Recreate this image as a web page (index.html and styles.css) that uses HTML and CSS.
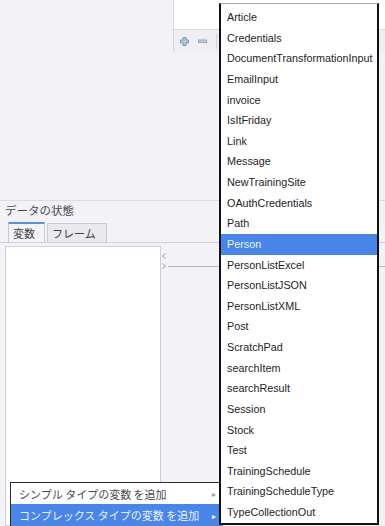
FILE: index.html
```html
<!DOCTYPE html>
<html lang="ja">
<head>
<meta charset="utf-8">
<link rel="stylesheet" href="styles.css">
</head>
<body>
<div class="page">
  <div class="listpanel">
    <div class="listbox"></div>
    <div class="toolbar">
      <svg class="tb-icon" width="9" height="9" viewBox="0 0 9 9"><path d="M3 0.5h3v2.5h2.5v3h-2.5v2.5h-3v-2.5h-2.5v-3h2.5z" fill="#b4c6de" stroke="#7f98bb" stroke-width="1"/></svg>
      <svg class="tb-icon" width="9" height="9" viewBox="0 0 9 9"><rect x="0.5" y="3" width="8" height="2.5" fill="#c3cfdf" stroke="#93a6c0" stroke-width="1"/></svg>
      <span class="tb-sep"></span>
    </div>
  </div>

  <div class="state">
    <div class="state-title">データの状態</div>
    <div class="tabs">
      <div class="tab tab-active">変数</div>
      <div class="tab">フレーム</div>
    </div>
    <div class="state-body">
      <div class="varbox"></div>
      <div class="splitter">
        <div class="arrows">
          <svg width="4" height="6" viewBox="0 0 4 6"><polyline points="3.5,0.5 0.5,3 3.5,5.5" fill="none" stroke="#9a9aa2" stroke-width="1"/></svg>
          <svg width="4" height="6" viewBox="0 0 4 6"><polyline points="0.5,0.5 3.5,3 0.5,5.5" fill="none" stroke="#9a9aa2" stroke-width="1"/></svg>
        </div>
        <div class="split-line"></div>
      </div>
    </div>
  </div>
</div>

<div class="ctxmenu">
  <div class="ctx-item"><span>シンプル タイプの変数 を追加</span><span class="ctx-arrow">▸</span></div>
  <div class="ctx-item ctx-active"><span>コンプレックス タイプの変数 を追加</span><span class="ctx-arrow">▸</span></div>
</div>

<div class="typemenu">
  <div class="tm-item">Article</div>
  <div class="tm-item">Credentials</div>
  <div class="tm-item">DocumentTransformationInput</div>
  <div class="tm-item">EmailInput</div>
  <div class="tm-item">invoice</div>
  <div class="tm-item">IsItFriday</div>
  <div class="tm-item">Link</div>
  <div class="tm-item">Message</div>
  <div class="tm-item">NewTrainingSite</div>
  <div class="tm-item">OAuthCredentials</div>
  <div class="tm-item">Path</div>
  <div class="tm-item tm-active">Person</div>
  <div class="tm-item">PersonListExcel</div>
  <div class="tm-item">PersonListJSON</div>
  <div class="tm-item">PersonListXML</div>
  <div class="tm-item">Post</div>
  <div class="tm-item">ScratchPad</div>
  <div class="tm-item">searchItem</div>
  <div class="tm-item">searchResult</div>
  <div class="tm-item">Session</div>
  <div class="tm-item">Stock</div>
  <div class="tm-item">Test</div>
  <div class="tm-item">TrainingSchedule</div>
  <div class="tm-item">TrainingScheduleType</div>
  <div class="tm-item">TypeCollectionOut</div>
</div>
</body>
</html>
```

FILE: styles.css
```css
html, body {
  margin: 0;
  padding: 0;
}
body {
  width: 385px;
  height: 526px;
  overflow: hidden;
  background: #f3f2f7;
  position: relative;
  font-family: "Noto Sans CJK JP", "Liberation Sans", sans-serif;
}
.page {
  display: flex;
  flex-direction: column;
  height: 526px;
}
.listpanel {
  margin-left: 173px;
  border-left: 1px solid #d6d6db;
  display: flex;
  flex-direction: column;
}
.listbox {
  height: 29px;
  background: #ffffff;
  border-bottom: 1px solid #dcdce0;
}
.toolbar {
  height: 22px;
  background: #efeff3;
  display: flex;
  align-items: center;
  padding-left: 6px;
  gap: 9px;
}
.tb-icon {
  display: block;
}
.tb-sep {
  width: 1px;
  height: 15px;
  background: #d4d4d9;
}
.state {
  margin-top: 148px;
  border-top: 1px solid #dcdce1;
  display: flex;
  flex-direction: column;
  flex: 1;
}
.state-title {
  height: 20px;
  line-height: 19px;
  font-size: 11.5px;
  color: #4a4a4f;
  padding-left: 5px;
}
.tabs {
  display: flex;
  padding-left: 8px;
  gap: 2px;
  height: 20px;
  border-bottom: 1px solid #d0d0d5;
  margin-top: 1px;
}
.tab {
  font-size: 11px;
  color: #444;
  line-height: 18px;
  padding: 0 10px 0 4px;
  border: 1px solid #c9c9ce;
  border-bottom: none;
  background: #e9e9ee;
  margin-top: 1px;
}
.tab-active {
  background: #f4f4f8;
  border-top: 2px solid #5a8fe0;
  margin-top: 0;
  padding: 0 9px 0 4px;
}
.state-body {
  display: flex;
  padding-top: 3px;
  padding-left: 5px;
  flex: 1;
}
.varbox {
  width: 154px;
  background: #ffffff;
  border: 1px solid #cfcfd4;
  align-self: stretch;
}
.splitter {
  display: flex;
  align-items: flex-start;
  padding-top: 7px;
  padding-left: 1px;
  flex: 1;
}
.arrows {
  display: flex;
  flex-direction: column;
  gap: 4px;
}
.arrows svg {
  display: block;
}
.split-line {
  flex: 1;
  height: 1px;
  background: #b8b8be;
  margin-top: 13px;
  margin-left: 2px;
}

/* context menu */
.ctxmenu {
  position: absolute;
  left: 10px;
  top: 482px;
  width: 212px;
  border-top: 1px solid #2a2a2e;
  border-left: 1px solid #2a2a2e;
  background: #ffffff;
}
.ctx-item {
  height: 21px;
  display: flex;
  align-items: center;
  justify-content: space-between;
  padding-left: 8px;
  padding-right: 7px;
  font-size: 11px;
  color: #4a4a4f;
}
.ctx-active {
  background: #4a86e8;
  color: #e8efff;
  height: 22px;
}
.ctx-arrow {
  font-size: 8px;
  color: #9a9aa0;
}
.ctx-active .ctx-arrow {
  color: #ffffff;
}

/* type menu */
.typemenu {
  position: absolute;
  left: 219px;
  top: 3px;
  width: 156px;
  background: #ffffff;
  border-top: 1px solid #a8a8ae;
  border-left: 2px solid #111;
  border-right: 2px solid #111;
  border-bottom: 2px solid #111;
  padding-top: 3px;
  font-family: "Liberation Sans", Arial, sans-serif;
}
.tm-item {
  height: 20.625px;
  line-height: 20.625px;
  padding-left: 6px;
  font-size: 10.8px;
  color: #1e1e1e;
  white-space: nowrap;
}
.tm-active {
  background: #4a86e8;
  color: #e8efff;
}
```
